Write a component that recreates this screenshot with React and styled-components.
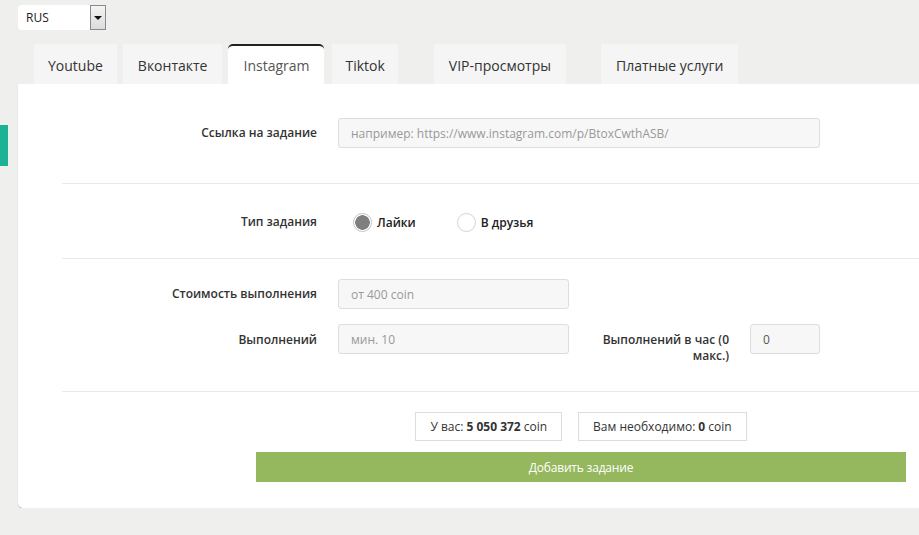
import React from 'react';
import styled, { createGlobalStyle } from 'styled-components';

const GlobalStyle = createGlobalStyle`
  body {
    margin: 0;
    background: #efefee;
    font-family: "Open Sans", "Liberation Sans", sans-serif;
    color: #333;
    overflow: hidden;
  }
`;

const Page = styled.div`
  padding: 5px 0 0 18px;
  width: 960px;
`;

const LangSelect = styled.div`
  display: flex;
  width: 88px;
  height: 25px;
  background: #fff;
  border-radius: 4px 0 0 4px;
  align-items: center;
  justify-content: space-between;
`;

const LangText = styled.span`
  font-size: 12px;
  padding-left: 8px;
  color: #222;
`;

const LangArrow = styled.span`
  width: 14px;
  height: 23px;
  border: 1px solid #8a8a8a;
  background: linear-gradient(#f4f4f4, #dcdcdc);
  display: flex;
  align-items: center;
  justify-content: center;
  &::after {
    content: '';
    border-left: 4px solid transparent;
    border-right: 4px solid transparent;
    border-top: 4px solid #111;
  }
`;

const Tabs = styled.div`
  display: flex;
  margin-top: 14px;
  padding-left: 16px;
  height: 40px;
  align-items: flex-end;
`;

const Tab = styled.div`
  height: 40px;
  box-sizing: border-box;
  padding: 0 ${p => p.$pad || 14}px;
  margin-right: ${p => p.$gap || 6}px;
  display: flex;
  align-items: center;
  font-size: 14px;
  background: ${p => (p.$active ? '#fff' : '#f5f5f5')};
  color: ${p => (p.$active ? '#555' : '#333')};
  border-top: ${p => (p.$active ? '2px solid #222' : '0')};
  border-radius: ${p => (p.$active ? '5px 5px 0 0' : '0')};
  padding-top: ${p => (p.$active ? 0 : 2)}px;
`;

const Panel = styled.div`
  background: #fff;
  border-radius: 0 0 0 5px;
  box-shadow: 0 1px 1px #bbb;
  padding-bottom: 26px;
`;

const Section = styled.div`
  margin-left: 44px;
  padding: ${p => p.$pad};
  border-bottom: 1px solid #eaeaea;
`;

const Row = styled.div`
  display: flex;
  align-items: ${p => p.$align || 'center'};
  margin-top: ${p => p.$mt || 0}px;
`;

const Label = styled.div`
  width: ${p => p.$w || 255}px;
  flex: none;
  text-align: right;
  font-size: 12px;
  font-weight: 600;
  color: #333;
  line-height: 16px;
  margin-left: ${p => p.$ml || 0}px;
  margin-right: 21px;
  padding-top: ${p => p.$pt || 0}px;
`;

const Input = styled.input`
  width: ${p => p.$w}px;
  height: 30px;
  box-sizing: border-box;
  border: 1px solid #ddd;
  border-radius: 3px;
  background: #f7f7f7;
  padding: 0 12px;
  font-family: inherit;
  font-size: 12px;
  color: #555;
  outline: none;
  &::placeholder {
    color: #999;
  }
`;

const Radios = styled.div`
  display: flex;
  align-items: center;
  height: 20px;
  margin-left: 15px;
`;

const Radio = styled.span`
  width: 19px;
  height: 19px;
  border-radius: 50%;
  box-sizing: border-box;
  border: 1px solid ${p => (p.$on ? '#c4c4c4' : '#d4d4d8')};
  background: ${p => (p.$on ? 'radial-gradient(circle, #7f7f7f 0 7px, #fff 7.5px)' : '#fff')};
  margin-right: 5px;
`;

const RadioText = styled.span`
  font-size: 12px;
  font-weight: 600;
  color: #222;
  margin-right: ${p => p.$gap || 0}px;
`;

const Footer = styled.div`
  margin-left: 238px;
  width: 650px;
  padding-top: 20px;
`;

const Balances = styled.div`
  display: flex;
  justify-content: center;
  gap: 16px;
`;

const Balance = styled.div`
  height: 29px;
  border: 1px solid #ddd;
  box-sizing: border-box;
  padding: 0 14px;
  display: flex;
  align-items: center;
  font-size: 12px;
  color: #333;
  b {
    font-weight: 700;
    margin: 0 3px;
  }
`;

const AddButton = styled.button`
  display: block;
  width: 650px;
  height: 30px;
  margin-top: 11px;
  border: 0;
  background: #95b75d;
  color: #fff;
  font-family: inherit;
  font-size: 12px;
  letter-spacing: -0.2px;
`;

const SideTab = styled.div`
  position: absolute;
  left: 0;
  top: 125px;
  width: 8px;
  height: 41px;
  background: #1bb394;
`;

export default function App() {
  return (
    <Page>
      <GlobalStyle />
      <SideTab />
      <LangSelect>
        <LangText>RUS</LangText>
        <LangArrow />
      </LangSelect>
      <Tabs>
        <Tab>Youtube</Tab>
        <Tab $pad={15}>Вконтакте</Tab>
        <Tab $active $pad={15} $gap={8}>Instagram</Tab>
        <Tab $pad={13} $gap={36}>Tiktok</Tab>
        <Tab $pad={15} $gap={35}>VIP-просмотры</Tab>
        <Tab $pad={15}>Платные услуги</Tab>
      </Tabs>
      <Panel>
        <Section $pad="34px 0 35px">
          <Row>
            <Label>Ссылка на задание</Label>
            <Input $w={482} placeholder="например: https://www.instagram.com/p/BtoxCwthASB/" />
          </Row>
        </Section>
        <Section $pad="28px 0 26px">
          <Row>
            <Label>Тип задания</Label>
            <Radios>
              <Radio $on />
              <RadioText $gap={41}>Лайки</RadioText>
              <Radio />
              <RadioText>В друзья</RadioText>
            </Radios>
          </Row>
        </Section>
        <Section $pad="20px 0 27px">
          <Row>
            <Label>Стоимость выполнения</Label>
            <Input $w={231} placeholder="от 400 coin" />
          </Row>
          <Row $mt={15} $align="flex-start">
            <Label $pt={8}>Выполнений</Label>
            <Input $w={231} placeholder="мин. 10" />
            <Label $w={139} $ml={21} $pt={8}>Выполнений в час (0 макс.)</Label>
            <Input $w={70} defaultValue="0" />
          </Row>
        </Section>
        <Footer>
          <Balances>
            <Balance>
              У вас:<b>5 050 372</b>coin
            </Balance>
            <Balance>
              Вам необходимо:<b>0</b>coin
            </Balance>
          </Balances>
          <AddButton>Добавить задание</AddButton>
        </Footer>
      </Panel>
    </Page>
  );
}
